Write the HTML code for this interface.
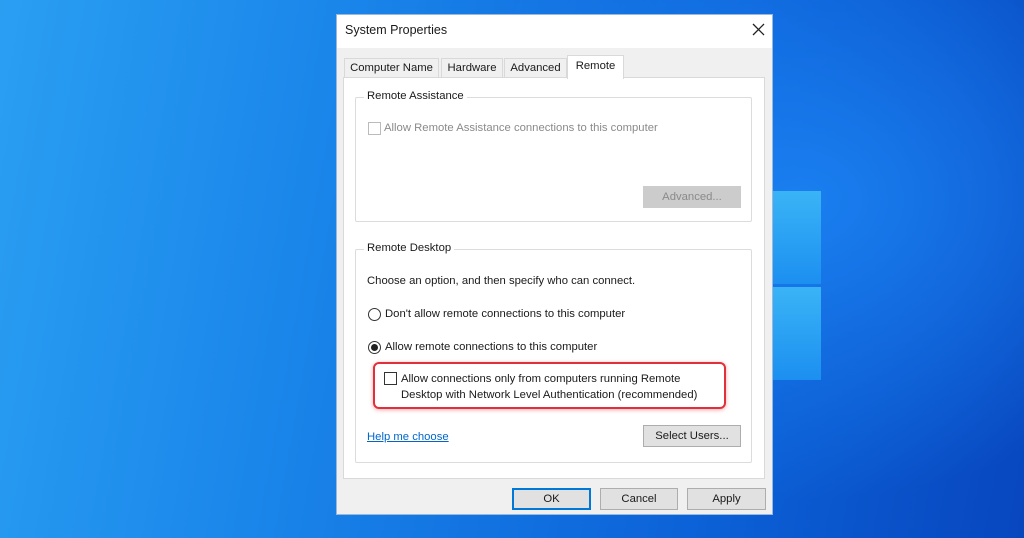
<!DOCTYPE html>
<html><head><meta charset="utf-8"><style>
*{margin:0;padding:0;box-sizing:border-box}
body{width:1024px;height:538px;overflow:hidden;position:relative;font-family:"Liberation Sans",sans-serif;font-size:11.3px;color:#1a1a1a;
background:radial-gradient(ellipse 420px 300px at 800px 200px,#1a7ff0 0%,rgba(20,110,230,0) 100%),linear-gradient(100deg,#2a9ff2 0%,#1a86ea 30%,#0c62d8 70%,#0846be 100%);}
.a{position:absolute;white-space:nowrap}
.pane{position:absolute;background:linear-gradient(180deg,#3ab4f6,#1c8ff0);}
.dlg{position:absolute;left:336px;top:14px;width:437px;height:501px;background:#f0f0f0;border:1px solid #9ab8dc}
.tab{position:absolute;top:43px;height:20px;border:1px solid #d9d9d9;border-bottom:none;background:#f0f0f0;text-align:center;line-height:19px}
.btn{position:absolute;height:22px;border:1px solid #adadad;background:#e1e1e1;text-align:center;line-height:20px}
.grp{position:absolute;border:1px solid #dcdcdc;border-radius:2px}
.lbl{position:absolute;background:#fff;padding:0 3px}
.cb{position:absolute;width:13px;height:13px;border:1px solid #333;background:#fff}
.rd{position:absolute;width:13px;height:13px;border:1px solid #333;border-radius:50%;background:#fff}
</style></head><body>
<div class="pane" style="left:773px;top:191px;width:48px;height:93px"></div>
<div class="pane" style="left:773px;top:287px;width:48px;height:93px"></div>
<div class="dlg">
 <div class="a" style="left:0;top:0;width:435px;height:33px;background:#fff"></div>
 <div class="a" style="left:8px;top:8px;font-size:12.5px">System Properties</div>
 <svg class="a" style="left:415px;top:8px" width="13" height="13"><path d="M1 1L12 12M12 1L1 12" stroke="#222" stroke-width="1.3"/></svg>
 <div class="tab" style="left:7px;width:95px">Computer Name</div>
 <div class="tab" style="left:104px;width:62px">Hardware</div>
 <div class="tab" style="left:167px;width:63px">Advanced</div>
 <div class="a" style="left:6px;top:62px;width:422px;height:402px;background:#fff;border:1px solid #d9d9d9"></div>
 <div class="tab" style="left:230px;top:40px;width:57px;height:24px;background:#fff;line-height:20px;z-index:2">Remote</div>
 <div class="grp" style="left:18px;top:82px;width:397px;height:125px"></div>
 <div class="lbl" style="left:27px;top:75px">Remote Assistance</div>
 <div class="cb" style="left:31px;top:107px;border-color:#bbb"></div>
 <div class="a" style="left:47px;top:107px;color:#8a8a8a">Allow Remote Assistance connections to this computer</div>
 <div class="btn" style="left:306px;top:171px;width:98px;color:#8a8a8a;border-color:#ccc;background:#ccc">Advanced...</div>
 <div class="grp" style="left:18px;top:234px;width:397px;height:214px"></div>
 <div class="lbl" style="left:27px;top:227px">Remote Desktop</div>
 <div class="a" style="left:30px;top:260px">Choose an option, and then specify who can connect.</div>
 <div class="rd" style="left:31px;top:293px"></div>
 <div class="a" style="left:48px;top:293px">Don't allow remote connections to this computer</div>
 <div class="rd" style="left:31px;top:326px"><div style="position:absolute;left:2px;top:2px;width:7px;height:7px;border-radius:50%;background:#222"></div></div>
 <div class="a" style="left:48px;top:326px">Allow remote connections to this computer</div>
 <div class="a" style="left:36px;top:347px;width:353px;height:47px;border:2px solid #e0303a;border-radius:6px;box-shadow:0 1px 4px rgba(224,48,58,.4)"></div>
 <div class="cb" style="left:47px;top:357px"></div>
 <div class="a" style="left:64px;top:356px;line-height:16px">Allow connections only from computers running Remote<br>Desktop with Network Level Authentication (recommended)</div>
 <div class="a" style="left:30px;top:416px;color:#0066cc;text-decoration:underline">Help me choose</div>
 <div class="btn" style="left:306px;top:410px;width:98px">Select Users...</div>
 <div class="btn" style="left:175px;top:473px;width:79px;border:2px solid #0078d7;line-height:18px">OK</div>
 <div class="btn" style="left:263px;top:473px;width:78px">Cancel</div>
 <div class="btn" style="left:350px;top:473px;width:79px">Apply</div>
</div>
</body></html>
